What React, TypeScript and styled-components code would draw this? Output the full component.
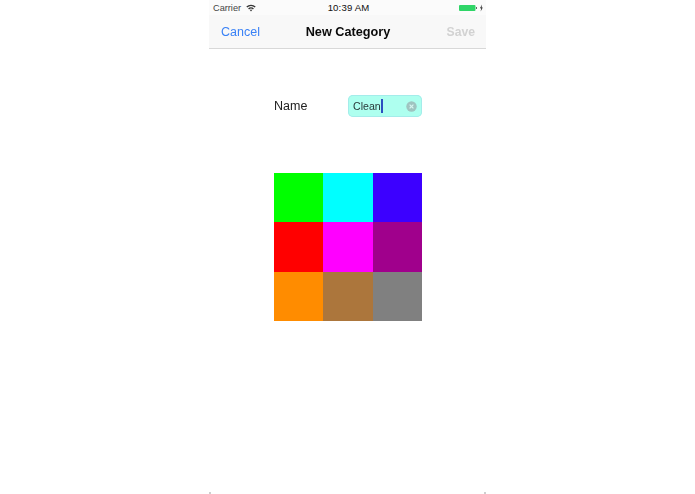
import React from "react";
import styled, { createGlobalStyle } from "styled-components";

const Global = createGlobalStyle`
  html, body { margin: 0; padding: 0; background: #fff; }
  body { font-family: "Liberation Sans", Arial, sans-serif; }
`;
const Stage = styled.div`
  width: 695px; height: 494px; overflow: hidden; background: #fff;
  display: flex; justify-content: flex-start; padding-left: 209px; box-sizing: border-box;
`;
const Phone = styled.div`
  width: 277px; height: 494px; display: flex; flex-direction: column; position: relative;
  filter: blur(0.3px);
`;
const StatusBar = styled.div`
  height: 15px; background: #fbfbfb; display: grid; grid-template-columns: 1fr auto 1fr;
  align-items: center; padding: 0 2px 0 4px; box-sizing: border-box;
`;
const StatusLeft = styled.div`display: flex; align-items: center; gap: 5px; color: #444; font-size: 9.2px;`;
const StatusTime = styled.div`font-size: 9.6px; color: #111; letter-spacing: 0.15px;`;
const StatusRight = styled.div`display: flex; align-items: center; justify-content: flex-end;`;
const NavBar = styled.div`
  height: 34px; background: #f8f8f8; border-bottom: 1px solid #d8d8d8; box-sizing: border-box;
  display: grid; grid-template-columns: 1fr auto 1fr; align-items: center; padding: 0 11px 0 12px;
`;
const NavButton = styled.div<{ $disabled?: boolean; $right?: boolean }>`
  font-size: ${(p) => (p.$disabled ? "12.2px" : "12.5px")};
  color: ${(p) => (p.$disabled ? "#d2d2d2" : "#3a82f6")};
  font-weight: ${(p) => (p.$disabled ? 700 : 400)};
  text-align: ${(p) => (p.$right ? "right" : "left")};
`;
const Title = styled.div`font-size: 12.7px; font-weight: 700; color: #0a0a0a;`;
const Content = styled.div`flex: 1; display: flex; flex-direction: column; padding: 46px 0 0 65px;`;
const NameRow = styled.div`display: flex; align-items: center; width: 148px; justify-content: space-between;`;
const Label = styled.div`font-size: 12.5px; color: #222;`;
const Field = styled.div`
  width: 74px; height: 22px; border-radius: 5px; background: #aeffef; box-shadow: inset 0 0 0 1px #a4ecea;
  display: flex; align-items: center; padding: 0 5px; box-sizing: border-box; font-size: 10.6px; color: #2a3a3a;
`;
const Caret = styled.span`display: inline-block; width: 2px; height: 14px; background: #2c4fc0;`;
const ClearIcon = styled.svg`margin-left: auto; width: 11px; height: 11px; flex: none;`;
const Grid = styled.div`
  margin-top: 56px; width: 148px; height: 148px; display: grid;
  grid-template-columns: repeat(3, 1fr); grid-template-rows: repeat(3, 1fr);
`;
const Swatch = styled.div<{ $color: string }>`background: ${(p) => p.$color};`;
const CornerMark = styled.div<{ $right?: boolean }>`
  position: absolute; bottom: 0; ${(p) => (p.$right ? "right: 0;" : "left: 0;")}
  width: 2px; height: 2px; background: #cfcfcf;
`;
const colors = ["#00ff00", "#00ffff", "#3c00ff", "#ff0000", "#ff00ff", "#a0008c", "#ff8c00", "#ac763c", "#808080"];

export default function App() {
  return (
    <Stage>
      <Global />
      <Phone>
        <StatusBar>
          <StatusLeft>
            Carrier
            <svg width="10" height="8" viewBox="0 0 10 8" aria-hidden="true">
              <path d="M0.3 2.6A6.6 6.6 0 0 1 9.7 2.6L8.7 3.6A5.2 5.2 0 0 0 1.3 3.6Z" fill="#333" />
              <path d="M2.1 4.4A4 4 0 0 1 7.9 4.4L6.9 5.4A2.6 2.6 0 0 0 3.1 5.4Z" fill="#333" />
              <path d="M3.9 6.1A1.5 1.5 0 0 1 6.1 6.1L5 7.4Z" fill="#333" />
            </svg>
          </StatusLeft>
          <StatusTime>10:39 AM</StatusTime>
          <StatusRight>
            <svg width="25" height="8" viewBox="0 0 25 8" aria-hidden="true">
              <rect x="0" y="1" width="16.5" height="6" rx="1" fill="#2fd567" />
              <rect x="17" y="3" width="1" height="2" fill="#666" />
              <path d="M23 0.5L21 4.3H22.3L21.6 7.5L23.8 3.5H22.5Z" fill="#222" />
            </svg>
          </StatusRight>
        </StatusBar>
        <NavBar>
          <NavButton>Cancel</NavButton>
          <Title>New Category</Title>
          <NavButton $disabled $right>Save</NavButton>
        </NavBar>
        <Content>
          <NameRow>
            <Label>Name</Label>
            <Field>
              Clean<Caret />
              <ClearIcon viewBox="0 0 11 11" aria-hidden="true">
                <circle cx="5.5" cy="5.5" r="5.2" fill="#9fc4c0" />
                <path d="M3.6 3.6L7.4 7.4M7.4 3.6L3.6 7.4" stroke="#d8f6f0" strokeWidth="1.2" />
              </ClearIcon>
            </Field>
          </NameRow>
          <Grid>
            {colors.map((c, i) => (
              <Swatch key={i} $color={c} />
            ))}
          </Grid>
        </Content>
        <CornerMark />
        <CornerMark $right />
      </Phone>
    </Stage>
  );
}
